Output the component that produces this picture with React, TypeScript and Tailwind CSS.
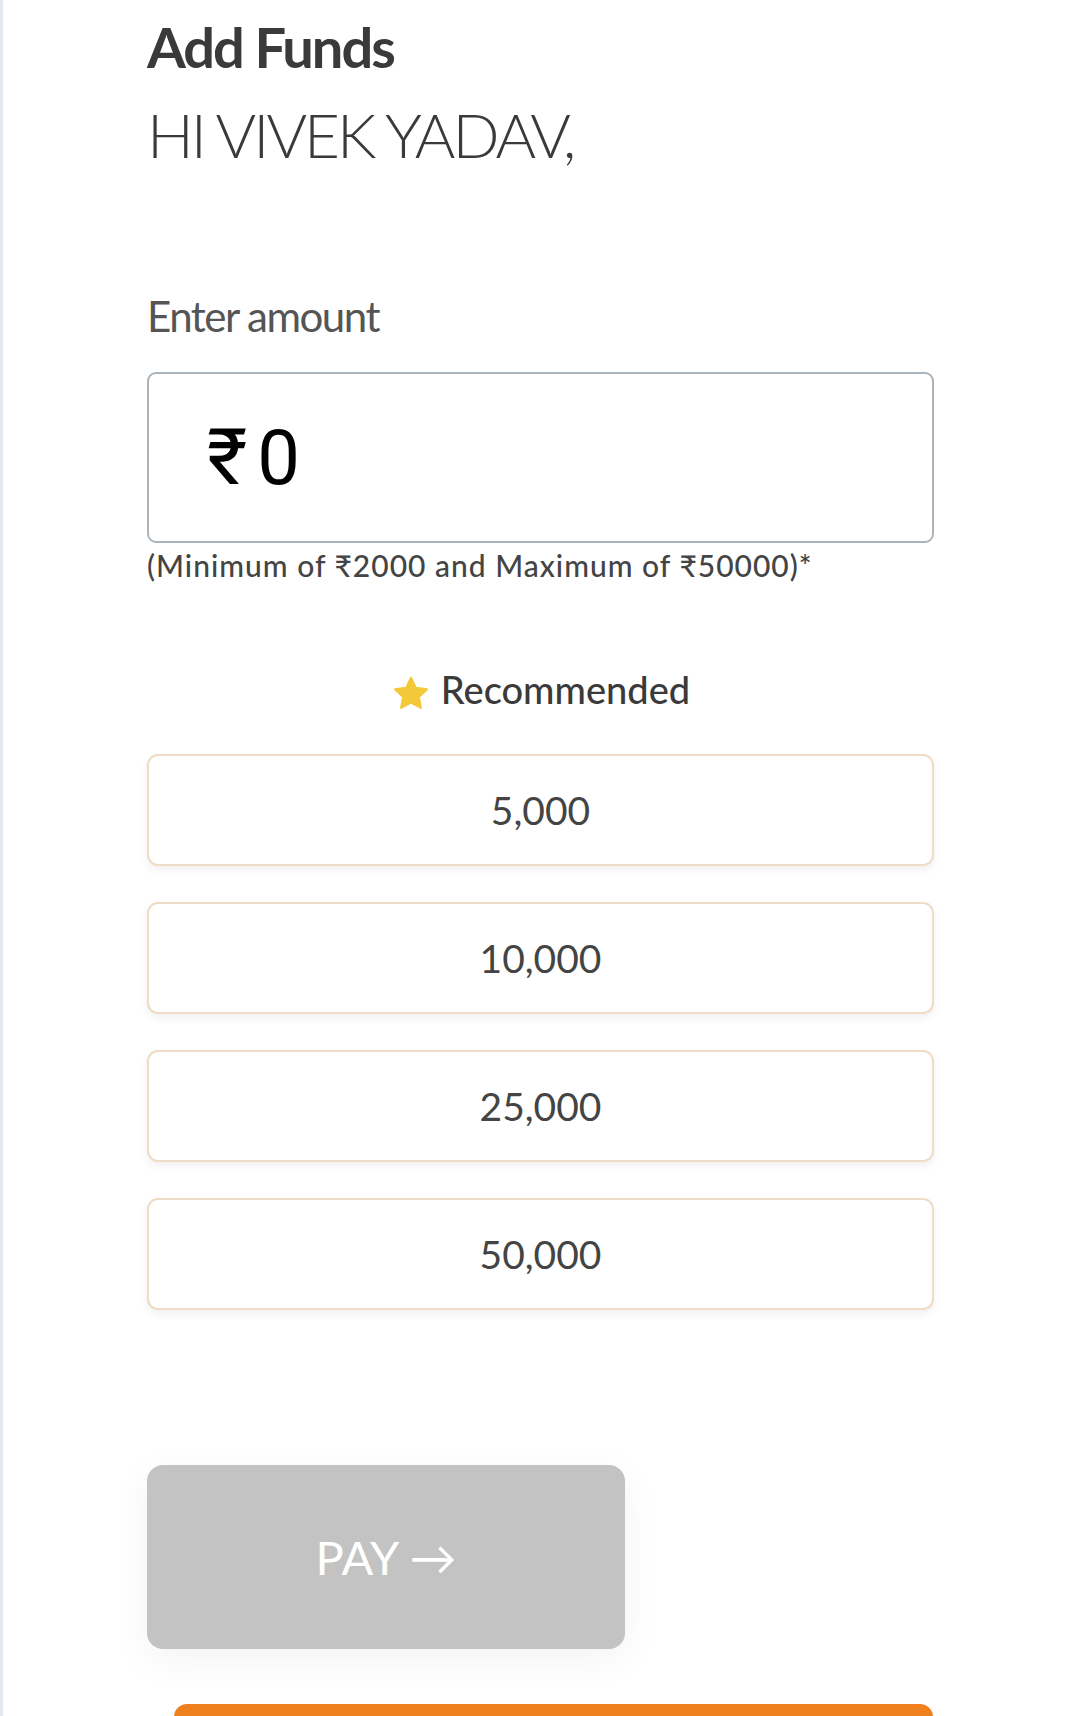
import React from "react";

function Star() {
  return (
    <svg width="40" height="40" viewBox="0 0 24 24" className="-my-[2px] translate-y-[5px]">
      <path
        d="M12 2.2l2.95 6.1 6.65.85-4.88 4.6 1.25 6.6L12 17.1l-5.97 3.25 1.25-6.6L2.4 9.15l6.65-.85z"
        fill="#f3c93a"
        stroke="#f3c93a"
        strokeWidth="1.2"
        strokeLinejoin="round"
      />
    </svg>
  );
}

export default function App() {
  const options = ["5,000", "10,000", "25,000", "50,000"];
  return (
    <div className="w-full min-h-[1716px] bg-white border-l-[3px] border-[#e4e9ef] font-['Lato',sans-serif] overflow-hidden">
      <div className="ml-[144px] w-[787px] pt-[19px] flex flex-col">
        <h1 className="text-[56px] leading-none font-bold tracking-[-2px] text-[#3a3a3a]">Add Funds</h1>
        <p className="mt-[28px] text-[62px] leading-none font-light tracking-[-3px] text-[#3a3a3a]">HI VIVEK YADAV,</p>
        <p className="mt-[130px] text-[42px] leading-none tracking-[-1.5px] text-[#555555]">Enter amount</p>
        <div className="mt-[35px] h-[171px] w-full rounded-[9px] border-2 border-[#a9b4bd] flex items-center pl-[58px]">
          <span className="font-['Roboto',sans-serif] text-[78px] leading-none text-black">₹</span>
          <span className="ml-[10px] font-['Roboto',sans-serif] text-[76px] leading-none text-black">0</span>
        </div>
        <p className="mt-[7px] text-[30px] leading-none font-medium tracking-[1px] text-[#444444]">
          (Minimum of ₹2000 and Maximum of ₹50000)*
        </p>
        <div className="mt-[90px] h-[38px] flex items-center justify-center gap-[10px]">
          <Star />
          <span className="text-[38px] leading-none font-medium text-[#3a3a3a]">Recommended</span>
        </div>
        <div className="mt-[46px] flex flex-col gap-[36px]">
          {options.map((o) => (
            <div
              key={o}
              className="h-[112px] w-full rounded-[11px] border-2 border-[#efdcc6] bg-white shadow-[0_4px_10px_rgba(0,0,0,0.06)] flex items-center justify-center"
            >
              <span className="text-[39px] leading-none text-[#444444]">{o}</span>
            </div>
          ))}
        </div>
        <button className="mt-[155px] h-[184px] w-[478px] rounded-[16px] bg-[#c3c3c3] shadow-[0_10px_40px_rgba(0,0,0,0.05)] flex items-center justify-center">
          <span className="text-[47px] leading-none text-white">PAY →</span>
        </button>
        <div className="mt-[55px] ml-[27px] w-[759px] h-[13px] rounded-t-[14px] bg-[#f07f1d]" />
      </div>
    </div>
  );
}
